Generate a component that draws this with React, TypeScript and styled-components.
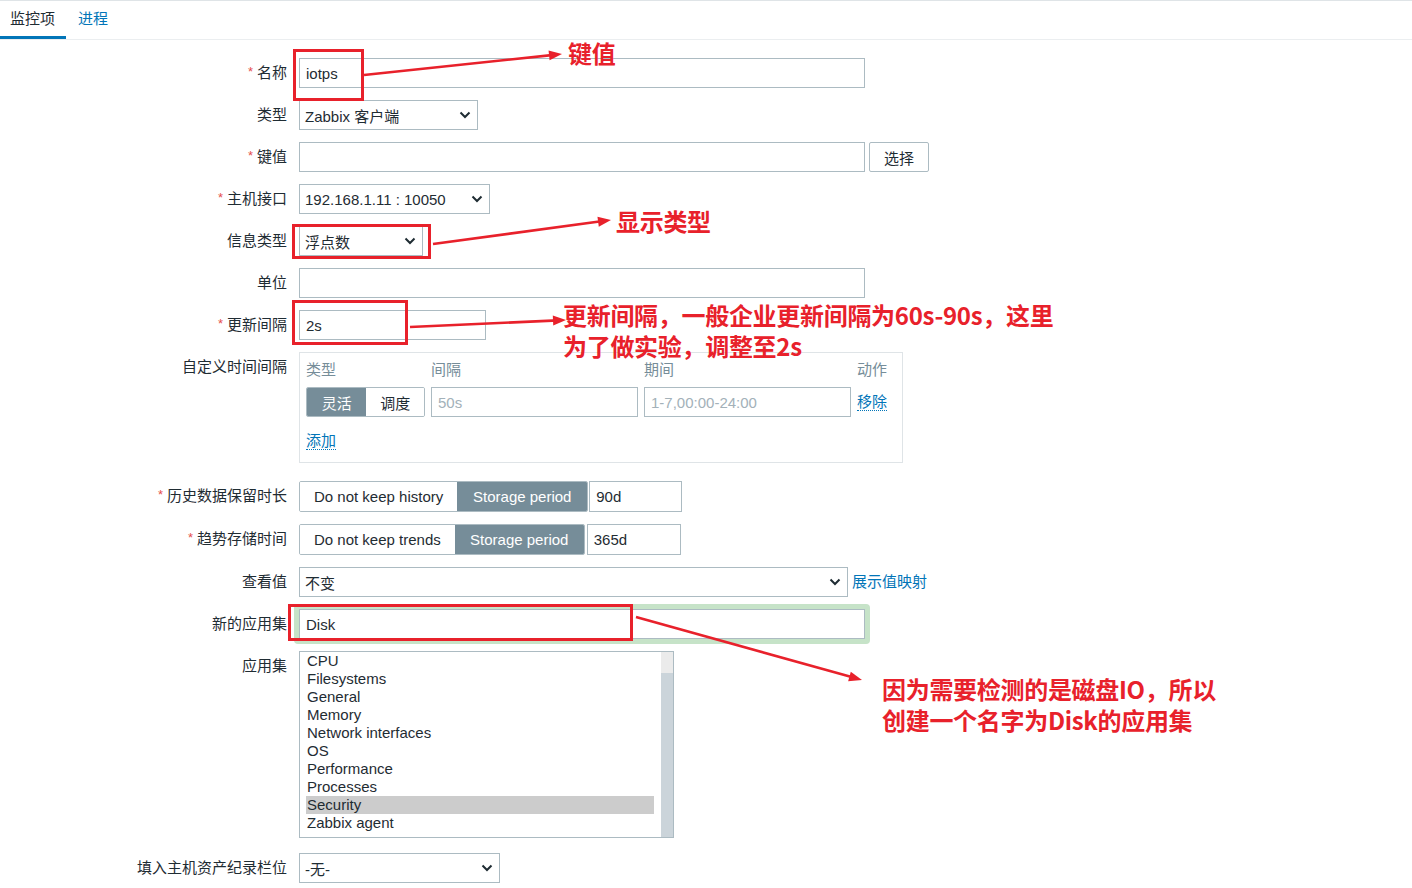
import React from 'react';
import styled, { createGlobalStyle } from 'styled-components';

const GlobalStyle = createGlobalStyle`
  html, body { margin: 0; padding: 0; background: #fff; }
  body {
    font-family: "Liberation Sans", Arial, "Noto Sans CJK SC", sans-serif;
    font-size: 15px;
    color: #1f2c33;
  }
  * { box-sizing: border-box; }
`;

const RED = '#e8212b';
const LINK = '#0275b8';
const BORDER = '#acbbc2';

const Page = styled.div`
  position: relative;
  width: 1412px;
  height: 888px;
  overflow: hidden;
  background: #fff;
`;

const TabBar = styled.div`
  display: flex;
  gap: 2px;
  height: 40px;
  border-top: 1px solid #dfe4e7;
  border-bottom: 1px solid #ebeef0;
`;

const Tab = styled.div<{ $active?: boolean }>`
  padding: 0 11px 0 10px;
  line-height: 35px;
  color: ${p => (p.$active ? '#1f2c33' : LINK)};
  border-bottom: 3px solid ${p => (p.$active ? LINK : 'transparent')};
`;

const Form = styled.div`
  display: flex;
  flex-direction: column;
  gap: 12px;
  padding-top: 18px;
`;

const Row = styled.div<{ $mt?: number }>`
  display: grid;
  grid-template-columns: 287px 1fr;
  column-gap: 12px;
  align-items: start;
  margin-top: ${p => p.$mt || 0}px;
`;

const Label = styled.div<{ $req?: boolean }>`
  height: 30px;
  text-align: right;
  line-height: 30px;
  white-space: nowrap;
  ${p =>
    p.$req
      ? `&::before {
    content: '*';
    color: #e54e4e;
    font-size: 13px;
    line-height: 1;
    margin-right: 4px;
    position: relative;
    top: -2px;
  }`
      : ''}
`;

const Field = styled.div`
  display: flex;
  align-items: center;
`;

const TextInput = styled.input<{ $w: number; $h?: number }>`
  width: ${p => p.$w}px;
  height: ${p => p.$h || 30}px;
  border: 1px solid ${BORDER};
  padding: 0 6px;
  font: inherit;
  color: #1f2c33;
  background: #fff;
  outline: none;
  &::placeholder { color: #a3b1b9; }
`;

const PeriodInput = styled(TextInput)<{ $ml: number }>`
  margin-left: ${p => p.$ml}px;
`;

const Button = styled.button`
  margin-left: 4px;
  width: 60px;
  height: 30px;
  border: 1px solid ${BORDER};
  border-radius: 2px;
  background: #fff;
  font: inherit;
  color: #1f2c33;
`;

const SelectBox = styled.div<{ $w: number }>`
  width: ${p => p.$w}px;
  height: 30px;
  border: 1px solid ${BORDER};
  display: flex;
  align-items: center;
  justify-content: space-between;
  padding: 0 6px 0 5px;
  background: #fff;
  white-space: nowrap;
`;

const Chevron = () => (
  <svg width="12" height="8" viewBox="0 0 12 8">
    <path d="M1.5 1.5 L6 6 L10.5 1.5" fill="none" stroke="#1f2c33" strokeWidth="2" />
  </svg>
);

const Select: React.FC<{ w: number; value: string }> = ({ w, value }) => (
  <SelectBox $w={w}>
    <span>{value}</span>
    <Chevron />
  </SelectBox>
);

const Segmented = styled.div<{ $h?: number }>`
  display: inline-flex;
  height: ${p => p.$h || 31}px;
  border: 1px solid ${BORDER};
  border-radius: 2px;
  overflow: hidden;
`;

const Seg = styled.div<{ $on?: boolean; $w?: number }>`
  padding: 0 14px;
  ${p => (p.$w ? `width: ${p.$w}px; padding: 0;` : '')}
  display: flex;
  align-items: center;
  justify-content: center;
  white-space: nowrap;
  background: ${p => (p.$on ? '#768d99' : '#fff')};
  color: ${p => (p.$on ? '#fff' : '#1f2c33')};
`;

const Link = styled.span<{ $dotted?: boolean }>`
  color: ${LINK};
  white-space: nowrap;
  line-height: 18px;
  border-bottom: ${p => (p.$dotted ? `1px dotted ${LINK}` : 'none')};
`;

const MappingLink = styled(Link)`
  margin-left: 4px;
`;

const IntervalBox = styled.div`
  width: 604px;
  border: 1px solid #dfe4e7;
  padding: 8px 6px 12px;
  margin-bottom: 6px;
`;

const IntervalGrid = styled.div<{ $mt?: number }>`
  display: grid;
  grid-template-columns: 119px 207px 207px 1fr;
  column-gap: 6px;
  align-items: center;
  margin-top: ${p => p.$mt || 0}px;
`;

const HeadCell = styled.div`
  color: #768d99;
  line-height: 18px;
`;

const AddRow = styled.div`
  margin-top: 15px;
  line-height: 18px;
`;

const Highlight = styled.div`
  margin: -5px;
  padding: 5px;
  border-radius: 4px;
  background: #c6e3c8;
  display: flex;
`;

const ListBox = styled.div`
  width: 375px;
  height: 187px;
  border: 1px solid ${BORDER};
  display: flex;
  background: #fff;
`;

const ListItems = styled.div`
  flex: 1;
  padding: 0 7px 0 6px;
`;

const ListItem = styled.div<{ $sel?: boolean }>`
  padding-left: 1px;
  line-height: 18px;
  background: ${p => (p.$sel ? '#cccccc' : 'transparent')};
`;

const ScrollTrack = styled.div`
  width: 12px;
  display: flex;
  flex-direction: column;
`;

const ScrollTop = styled.div`
  height: 21px;
  background: #ebebeb;
`;

const ScrollThumb = styled.div`
  flex: 1;
  background: #cbd4da;
`;

/* annotation layer */
const Overlay = styled.div`
  position: absolute;
  inset: 0;
  pointer-events: none;
`;

const RedBox = styled.div<{ $x: number; $y: number; $w: number; $h: number }>`
  position: absolute;
  left: ${p => p.$x}px;
  top: ${p => p.$y}px;
  width: ${p => p.$w}px;
  height: ${p => p.$h}px;
  border: 3px solid ${RED};
`;

const Note = styled.div<{ $x: number; $y: number }>`
  position: absolute;
  left: ${p => p.$x}px;
  top: ${p => p.$y}px;
  color: ${RED};
  font-family: "Noto Sans CJK SC", "Liberation Sans", sans-serif;
  font-weight: 700;
  font-size: 24px;
  line-height: 31px;
  white-space: nowrap;
  letter-spacing: -0.3px;
`;

const ArrowLayer = styled.svg`
  position: absolute;
  left: 0;
  top: 0;
`;

const arrows: [number, number, number, number][] = [
  [364, 75, 562, 54],
  [433, 244, 611, 220],
  [410, 327, 566, 320],
  [636, 617, 862, 680],
];

const head = (x1: number, y1: number, x2: number, y2: number) => {
  const a = Math.atan2(y2 - y1, x2 - x1);
  const len = 13;
  const hw = 5;
  const bx = x2 - len * Math.cos(a);
  const by = y2 - len * Math.sin(a);
  const px = -Math.sin(a) * hw;
  const py = Math.cos(a) * hw;
  return `${x2},${y2} ${bx + px},${by + py} ${bx - px},${by - py}`;
};

const apps = [
  'CPU',
  'Filesystems',
  'General',
  'Memory',
  'Network interfaces',
  'OS',
  'Performance',
  'Processes',
  'Security',
  'Zabbix agent',
];

const App: React.FC = () => (
  <Page>
    <GlobalStyle />
    <TabBar>
      <Tab $active>监控项</Tab>
      <Tab>进程</Tab>
    </TabBar>

    <Form>
      <Row>
        <Label $req>名称</Label>
        <Field><TextInput $w={566} defaultValue="iotps" /></Field>
      </Row>
      <Row>
        <Label>类型</Label>
        <Field><Select w={179} value="Zabbix 客户端" /></Field>
      </Row>
      <Row>
        <Label $req>键值</Label>
        <Field>
          <TextInput $w={566} defaultValue="" />
          <Button>选择</Button>
        </Field>
      </Row>
      <Row>
        <Label $req>主机接口</Label>
        <Field><Select w={191} value="192.168.1.11 : 10050" /></Field>
      </Row>
      <Row>
        <Label>信息类型</Label>
        <Field><Select w={124} value="浮点数" /></Field>
      </Row>
      <Row>
        <Label>单位</Label>
        <Field><TextInput $w={566} defaultValue="" /></Field>
      </Row>
      <Row>
        <Label $req>更新间隔</Label>
        <Field><TextInput $w={187} defaultValue="2s" /></Field>
      </Row>
      <Row>
        <Label>自定义时间间隔</Label>
        <IntervalBox>
          <IntervalGrid>
            <HeadCell>类型</HeadCell>
            <HeadCell>间隔</HeadCell>
            <HeadCell>期间</HeadCell>
            <HeadCell>动作</HeadCell>
          </IntervalGrid>
          <IntervalGrid $mt={8}>
            <Segmented $h={30}>
              <Seg $on $w={60}>灵活</Seg>
              <Seg $w={58}>调度</Seg>
            </Segmented>
            <TextInput $w={207} placeholder="50s" />
            <TextInput $w={207} placeholder="1-7,00:00-24:00" />
            <div><Link $dotted>移除</Link></div>
          </IntervalGrid>
          <AddRow><Link $dotted>添加</Link></AddRow>
        </IntervalBox>
      </Row>
      <Row>
        <Label $req>历史数据保留时长</Label>
        <Field>
          <Segmented>
            <Seg>Do not keep history</Seg>
            <Seg $on $w={130}>Storage period</Seg>
          </Segmented>
          <PeriodInput $w={93} $h={31} $ml={1} defaultValue="90d" />
        </Field>
      </Row>
      <Row>
        <Label $req>趋势存储时间</Label>
        <Field>
          <Segmented>
            <Seg>Do not keep trends</Seg>
            <Seg $on $w={129}>Storage period</Seg>
          </Segmented>
          <PeriodInput $w={94} $h={31} $ml={2} defaultValue="365d" />
        </Field>
      </Row>
      <Row>
        <Label>查看值</Label>
        <Field>
          <Select w={549} value="不变" />
          <MappingLink>展示值映射</MappingLink>
        </Field>
      </Row>
      <Row>
        <Label>新的应用集</Label>
        <Field>
          <Highlight>
            <TextInput $w={566} defaultValue="Disk" />
          </Highlight>
        </Field>
      </Row>
      <Row>
        <Label>应用集</Label>
        <Field>
          <ListBox>
            <ListItems>
              {apps.map(a => (
                <ListItem key={a} $sel={a === 'Security'}>{a}</ListItem>
              ))}
            </ListItems>
            <ScrollTrack>
              <ScrollTop />
              <ScrollThumb />
            </ScrollTrack>
          </ListBox>
        </Field>
      </Row>
      <Row $mt={3}>
        <Label>填入主机资产纪录栏位</Label>
        <Field><Select w={201} value="-无-" /></Field>
      </Row>
    </Form>

    <Overlay>
      <RedBox $x={293} $y={49} $w={71} $h={52} />
      <RedBox $x={292} $y={224} $w={139} $h={35} />
      <RedBox $x={292} $y={300} $w={116} $h={45} />
      <RedBox $x={288} $y={604} $w={345} $h={37} />
      <ArrowLayer width="1412" height="888" viewBox="0 0 1412 888">
        {arrows.map(([x1, y1, x2, y2], i) => {
          const a = Math.atan2(y2 - y1, x2 - x1);
          return (
            <g key={i}>
              <line x1={x1} y1={y1} x2={x2 - 8 * Math.cos(a)} y2={y2 - 8 * Math.sin(a)} stroke={RED} strokeWidth="2.6" />
              <polygon points={head(x1, y1, x2, y2)} fill={RED} />
            </g>
          );
        })}
      </ArrowLayer>
      <Note $x={568} $y={37}>键值</Note>
      <Note $x={616} $y={205}>显示类型</Note>
      <Note $x={563} $y={299}>
        更新间隔，一般企业更新间隔为60s-90s，这里
        <br />
        为了做实验，调整至2s
      </Note>
      <Note $x={882} $y={673}>
        因为需要检测的是磁盘IO，所以
        <br />
        创建一个名字为Disk的应用集
      </Note>
    </Overlay>
  </Page>
);

export default App;
